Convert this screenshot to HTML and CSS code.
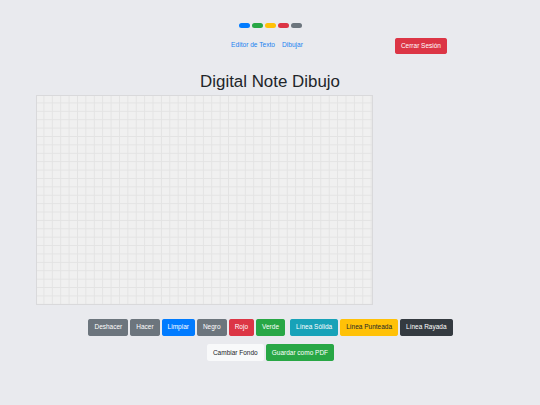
FILE: index.html
```html
<!DOCTYPE html>
<html lang="es">
<head>
<meta charset="utf-8">
<title>Digital Note Dibujo</title>
<link rel="stylesheet" href="styles.css">
</head>
<body>
<header class="header">
  <div class="dots">
    <span class="dot dot-blue"></span>
    <span class="dot dot-green"></span>
    <span class="dot dot-yellow"></span>
    <span class="dot dot-red"></span>
    <span class="dot dot-gray"></span>
  </div>
  <nav class="nav">
    <div class="nav-side"></div>
    <div class="nav-links">
      <a class="nav-link" href="#">Editor de Texto</a>
      <a class="nav-link" href="#">Dibujar</a>
    </div>
    <div class="nav-side nav-right">
      <button class="btn btn-danger btn-logout">Cerrar Sesión</button>
    </div>
  </nav>
</header>
<main class="main">
  <h1 class="title">Digital Note Dibujo</h1>
  <div class="canvas-wrap">
    <div class="canvas"></div>
  </div>
  <div class="toolbar">
    <div class="group">
      <button class="btn btn-secondary">Deshacer</button>
      <button class="btn btn-secondary">Hacer</button>
      <button class="btn btn-primary">Limpiar</button>
      <button class="btn btn-secondary">Negro</button>
      <button class="btn btn-danger">Rojo</button>
      <button class="btn btn-success">Verde</button>
    </div>
    <div class="group">
      <button class="btn btn-info">Línea Sólida</button>
      <button class="btn btn-warning">Línea Punteada</button>
      <button class="btn btn-dark">Línea Rayada</button>
    </div>
  </div>
  <div class="toolbar toolbar-2">
    <div class="group">
      <button class="btn btn-light">Cambiar Fondo</button>
      <button class="btn btn-success">Guardar como PDF</button>
    </div>
  </div>
</main>
</body>
</html>
```

FILE: styles.css
```css
html, body {
  margin: 0;
  padding: 0;
}
body {
  background: #e9eaee;
  font-family: "Liberation Sans", Arial, sans-serif;
  color: #212529;
  width: 540px;
  height: 405px;
  overflow: hidden;
}
.header {
  display: flex;
  flex-direction: column;
  align-items: center;
  padding-top: 22.5px;
}
.dots {
  display: flex;
  gap: 1.6px;
  margin-left: 1px;
}
.dot {
  width: 11.4px;
  height: 5.8px;
  border-radius: 3px;
}
.dot-blue { background: #007bff; }
.dot-green { background: #28a745; }
.dot-yellow { background: #ffc107; }
.dot-red { background: #dc3545; }
.dot-gray { background: #6c757d; }

.nav {
  width: 100%;
  display: grid;
  grid-template-columns: 1fr auto 1fr;
  align-items: center;
  margin-top: 5.5px;
}
.nav-links {
  display: flex;
  gap: 7px;
  padding-right: 6px;
  padding-top: 1.5px;
}
.nav-link {
  color: #1a82f0;
  text-decoration: none;
  font-size: 6.6px;
}
.nav-right {
  padding-left: 86px;
}
.btn {
  font-family: "Liberation Sans", Arial, sans-serif;
  font-size: 6.5px;
  line-height: 10px;
  padding: 2.6px 5px;
  border: 0.6px solid transparent;
  border-radius: 1.7px;
  color: #fff;
  cursor: pointer;
  margin: 0;
}
.btn-logout {
  padding: 1.8px 5px;
}
.btn-primary { background: #007bff; border-color: #007bff; }
.btn-secondary { background: #6c757d; border-color: #6c757d; }
.btn-success { background: #28a745; border-color: #28a745; }
.btn-danger { background: #dc3545; border-color: #dc3545; }
.btn-info { background: #17a2b8; border-color: #17a2b8; }
.btn-warning { background: #ffc107; border-color: #ffc107; color: #212529; }
.btn-dark { background: #343a40; border-color: #343a40; }
.btn-light { background: #f8f9fa; border-color: #f8f9fa; color: #212529; }

.main {
  display: flex;
  flex-direction: column;
}
.title {
  margin: 17px 0 0;
  font-size: 16.9px;
  font-weight: 400;
  line-height: 21px;
  text-align: center;
  color: #212529;
}
.canvas-wrap {
  padding-left: 36px;
  margin-top: 3.5px;
}
.canvas {
  width: 337px;
  height: 210px;
  box-sizing: border-box;
  border: 1px solid #d9d9db;
  background-color: #f0f0f0;
  background-image:
    linear-gradient(to right, transparent 7.5px, #e3e3e3 7.5px, #e3e3e3 8.4px),
    linear-gradient(to bottom, transparent 7.5px, #e3e3e3 7.5px, #e3e3e3 8.4px);
  background-size: 8.4px 8.4px;
  background-position: -1px -1px;
}
.toolbar {
  display: flex;
  justify-content: center;
  gap: 5px;
  margin-top: 13.5px;
  padding-left: 1px;
}
.toolbar-2 {
  margin-top: 8.5px;
}
.group {
  display: flex;
  gap: 2px;
}
```
